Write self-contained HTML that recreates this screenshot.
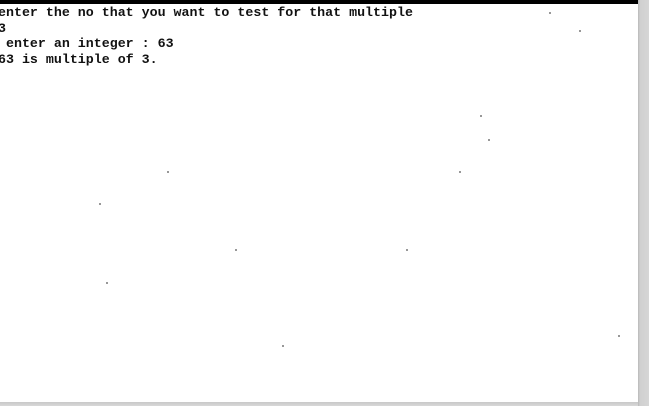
<!DOCTYPE html>
<html><head><style>
html,body{margin:0;padding:0;width:649px;height:406px;overflow:hidden;background:#fff}
.top{position:absolute;left:0;top:0;width:638px;height:4px;background:#000}
.right{position:absolute;left:638px;top:0;width:11px;height:406px;background:linear-gradient(to right,#b8b8b8 0,#d0d0d0 2px,#d6d6d6 100%)}
.bot{position:absolute;left:0;top:402px;width:638px;height:4px;background:linear-gradient(#c8c8c8,#d8d8d8)}
pre{position:absolute;left:-2px;top:5px;margin:0;font-family:"Liberation Mono",monospace;font-weight:bold;font-size:13.3px;line-height:15.7px;color:#111}
.d{position:absolute;width:2px;height:2px;background:#777;border-radius:1px}
</style></head><body>
<div class="top"></div>
<pre>enter the no that you want to test for that multiple
3
 enter an integer : 63
63 is multiple of 3.</pre>
<div class="d" style="left:480px;top:115px"></div>
<div class="d" style="left:488px;top:139px"></div>
<div class="d" style="left:167px;top:171px"></div>
<div class="d" style="left:459px;top:171px"></div>
<div class="d" style="left:99px;top:203px"></div>
<div class="d" style="left:235px;top:249px"></div>
<div class="d" style="left:406px;top:249px"></div>
<div class="d" style="left:106px;top:282px"></div>
<div class="d" style="left:282px;top:345px"></div>
<div class="d" style="left:618px;top:335px"></div>
<div class="d" style="left:549px;top:12px"></div>
<div class="d" style="left:579px;top:30px"></div>
<div class="right"></div>
<div class="bot"></div>
</body></html>
